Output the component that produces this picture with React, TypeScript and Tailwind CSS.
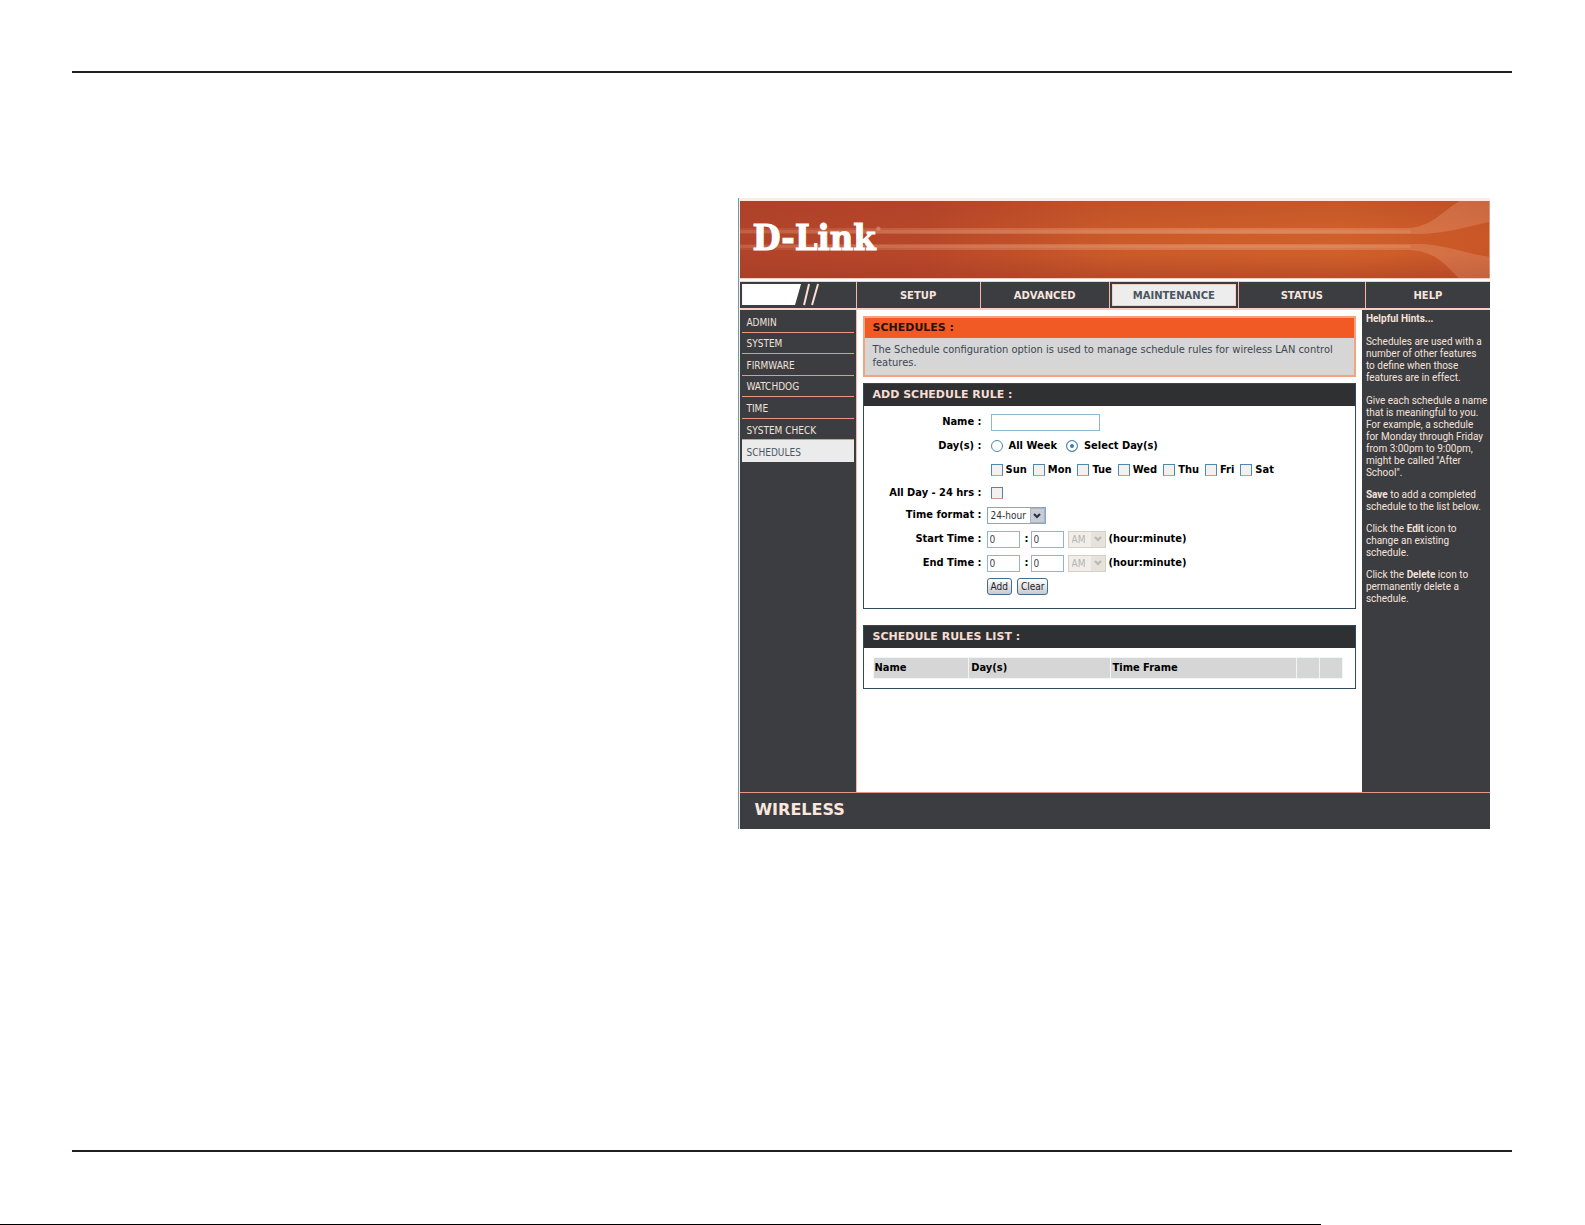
import { useState } from "react";
import type { ReactNode } from "react";

const SIDE_LINKS = ["ADMIN", "SYSTEM", "FIRMWARE", "WATCHDOG", "TIME", "SYSTEM CHECK", "SCHEDULES"];
const TABS = ["SETUP", "ADVANCED", "MAINTENANCE", "STATUS", "HELP"];
const DAYS = ["Sun", "Mon", "Tue", "Wed", "Thu", "Fri", "Sat"];

const WIDE = "font-['DejaVu_Sans',sans-serif]";
const FIELD = "h-[17px] border border-[#8fb6cf] bg-white px-[2px] text-[10px] font-normal text-[#444] outline-none";
const BUTTON =
  "h-[17px] rounded-[3px] border border-[#3f6f92] bg-linear-to-b from-white to-[#c9c9d2] px-[3px] text-[10px] leading-[14px] font-normal text-[#222]";

function Banner() {
  return (
    <header className="relative h-[77px] overflow-hidden">
      <svg className="absolute inset-0 h-full w-full" viewBox="0 0 749 77" preserveAspectRatio="none" aria-hidden="true">
        <defs>
          <linearGradient id="base" x1="0" x2="1" y1="0" y2="0">
            <stop offset="0" stopColor="#b0432a" />
            <stop offset="0.25" stopColor="#b84729" />
            <stop offset="0.5" stopColor="#cb5a29" />
            <stop offset="0.8" stopColor="#d0602a" />
            <stop offset="1" stopColor="#c85627" />
          </linearGradient>
          <linearGradient id="shade" x1="0" x2="0" y1="0" y2="1">
            <stop offset="0" stopColor="#a33a26" stopOpacity="0.25" />
            <stop offset="0.4" stopColor="#a33a26" stopOpacity="0" />
            <stop offset="0.7" stopColor="#a33a26" stopOpacity="0" />
            <stop offset="1" stopColor="#a33a26" stopOpacity="0.5" />
          </linearGradient>
          <linearGradient id="streak" x1="0" x2="1" y1="0" y2="0">
            <stop offset="0" stopColor="#f0b090" stopOpacity="0.1" />
            <stop offset="0.3" stopColor="#f0b090" stopOpacity="0.28" />
            <stop offset="0.7" stopColor="#f0b090" stopOpacity="0.36" />
            <stop offset="1" stopColor="#f0b090" stopOpacity="0.25" />
          </linearGradient>
        </defs>
        <rect width="749" height="77" fill="url(#base)" />
        <rect width="749" height="77" fill="url(#shade)" />
        <path fill="url(#streak)" d="M0 27H668C690 26 700 12 719 0H749V21C724 26 705 33 675 33H0Z" />
        <path fill="url(#streak)" d="M0 43H675C705 43 722 52 749 56V77H718C703 62 694 49 665 49H0Z" />
        <path fill="#f0b090" fillOpacity="0.18" d="M0 29H670V32H0ZM0 44H670V47H0Z" />
      </svg>
      <div className="relative flex items-start pt-4 pl-3 text-white">
        <span className="font-['DejaVu_Serif_Condensed','DejaVu_Serif',serif] text-[36px] leading-[40px] font-bold [-webkit-text-stroke:1px_white]">
          D-Link
        </span>
        <span className="pt-2 text-[6px] leading-[8px] text-[#e6b3a0]">®</span>
      </div>
    </header>
  );
}

function NavBar() {
  return (
    <nav
      className={`grid h-[26px] grid-cols-[115fr_124fr_129fr_129fr_127fr_125fr] bg-[#3b3d41] text-[10px] font-bold text-[#f7e6df] ${WIDE}`}
    >
      <svg className="h-full w-full" viewBox="0 0 115 26" aria-hidden="true">
        <path fill="#fff" d="M2 2H61L55 23H2Z" />
        <path fill="none" stroke="#fbe0d6" strokeWidth="2" d="M69 2L64 23M78 2L72 23" />
      </svg>
      {TABS.map(tab => (
        <a key={tab} href="#" className="flex border-l border-[#f6b9a5]">
          <span
            className={
              tab === "MAINTENANCE"
                ? "m-[2px] flex flex-1 items-center justify-center border border-[#f6cdbf] bg-[#ededed] text-[#4a5560]"
                : "flex flex-1 items-center justify-center"
            }
          >
            {tab}
          </span>
        </a>
      ))}
    </nav>
  );
}

function SideMenu() {
  return (
    <aside className="border-r border-[#f6b9a5] bg-[#3b3d41] px-[2px] pt-px">
      <ul className="grid h-[151px] auto-rows-fr text-[10px]">
        {SIDE_LINKS.map(link => (
          <li key={link} className={link === "SCHEDULES" ? "bg-[#ebebeb] text-[#4a5864]" : "border-b border-[#e89882] text-[#f3e2dc]"}>
            <a href="#" className="flex h-full items-center pt-[2px] pl-1">{link}</a>
          </li>
        ))}
      </ul>
    </aside>
  );
}

function Hints() {
  return (
    <aside className="bg-[#3b3d41] pt-[3px] pl-1 font-['Roboto',sans-serif] text-[10px] leading-[12px] whitespace-nowrap text-[#f7e2da]">
      <h2 className="mb-[11px] font-bold">Helpful Hints...</h2>
      <p className="mb-[11px]">
        Schedules are used with a<br />number of other features<br />to define when those<br />features are in effect.
      </p>
      <p className="mb-[10px]">
        Give each schedule a name<br />that is meaningful to you.<br />For example, a schedule<br />for Monday through Friday
        <br />from 3:00pm to 9:00pm,<br />might be called "After<br />School".
      </p>
      <p className="mb-[10px]">
        <b>Save</b> to add a completed<br />schedule to the list below.
      </p>
      <p className="mb-[10px]">
        Click the <b>Edit</b> icon to<br />change an existing<br />schedule.
      </p>
      <p>
        Click the <b>Delete</b> icon to<br />permanently delete a<br />schedule.
      </p>
    </aside>
  );
}

function Panel({ title, children }: { title: string; children: ReactNode }) {
  return (
    <section className="border border-[#2f4a5a]">
      <h2 className={`flex h-[22px] items-center bg-[#2f3032] pt-px pl-[9px] text-[11px] font-bold text-[#f7ddd4] ${WIDE}`}>
        {title}
      </h2>
      {children}
    </section>
  );
}

function Row({ label, htmlFor, height = "h-6", children }: { label?: string; htmlFor?: string; height?: string; children: ReactNode }) {
  return (
    <div className={`flex items-center ${height}`}>
      <label htmlFor={htmlFor} className="mr-[5px] w-[118px] shrink-0 text-right">{label}</label>
      {children}
    </div>
  );
}

function Check({ id, label }: { id: string; label?: string }) {
  return (
    <span className="flex items-center">
      <input
        id={id}
        type="checkbox"
        className="h-3 w-3 appearance-none border border-[#4b88b2] border-b-[#d19a90] bg-[#f4f0ee] checked:bg-[#4b88b2]"
      />
      {label && <label htmlFor={id} className="ml-[3px]">{label}</label>}
    </span>
  );
}

function Radio({ id, label, checked, onPick }: { id: string; label: string; checked: boolean; onPick: () => void }) {
  return (
    <span className="flex items-center">
      <input
        id={id}
        type="radio"
        name="days"
        checked={checked}
        onChange={onPick}
        className="h-3 w-3 appearance-none rounded-full border border-[#4b88b2] bg-white checked:bg-[#3f7aa3] checked:shadow-[inset_0_0_0_3px_#fff]"
      />
      <label htmlFor={id} className="ml-[6px]">{label}</label>
    </span>
  );
}

function Select({ id, name, options, disabled }: { id: string; name: string; options: string[]; disabled?: boolean }) {
  return (
    <span className="relative inline-flex">
      <select
        id={id}
        aria-label={name}
        disabled={disabled}
        className={
          disabled
            ? "h-[17px] w-[38px] appearance-none border border-[#d6cfc6] bg-[#f1eee9] pl-[3px] text-[10px] font-normal text-[#b4b4b0]"
            : "h-[17px] w-[59px] appearance-none border border-[#7fa9c6] bg-white pl-[3px] text-[10px] font-normal text-[#333]"
        }
      >
        {options.map(o => <option key={o}>{o}</option>)}
      </select>
      <span
        className={
          disabled
            ? "pointer-events-none absolute top-px right-px bottom-px flex w-[14px] items-center justify-center bg-[#e6e2dc] text-[#bdb8b2]"
            : "pointer-events-none absolute top-px right-px bottom-px flex w-[15px] items-center justify-center border border-[#a9b4c4] bg-[#c8ccd4] text-[#2c3440]"
        }
      >
        <svg className="h-[6px] w-2" viewBox="0 0 8 6" aria-hidden="true">
          <path d="M1 1L4 4L7 1" fill="none" stroke="currentColor" strokeWidth="2.2" />
        </svg>
      </span>
    </span>
  );
}

function TimeRow({ label, id }: { label: string; id: string }) {
  return (
    <Row label={label} htmlFor={`${id}-hour`}>
      <input id={`${id}-hour`} defaultValue="0" className={`w-[33px] ${FIELD}`} />
      <span className="w-[11px] pl-[3px] text-center">:</span>
      <input id={`${id}-minute`} aria-label={`${label} minute`} defaultValue="0" className={`mr-1 w-[33px] ${FIELD}`} />
      <Select id={`${id}-half`} name={`${label} AM or PM`} options={["AM", "PM"]} disabled />
      <span className="ml-[3px]">(hour:minute)</span>
    </Row>
  );
}

function RuleForm() {
  const [mode, setMode] = useState<"all" | "select">("select");

  return (
    <form className="pt-1 pb-[10px] text-[11px] font-bold whitespace-nowrap text-black" onSubmit={e => e.preventDefault()}>
      <Row label="Name :" htmlFor="name">
        <input id="name" className={`ml-1 w-[109px] ${FIELD}`} />
      </Row>
      <Row label="Day(s) :" htmlFor="all-week">
        <div className="ml-1 flex gap-[9px]">
          <Radio id="all-week" label="All Week" checked={mode === "all"} onPick={() => setMode("all")} />
          <Radio id="select-days" label="Select Day(s)" checked={mode === "select"} onPick={() => setMode("select")} />
        </div>
      </Row>
      <Row>
        <div className="ml-1 flex gap-[6px]">
          {DAYS.map(d => <Check key={d} id={d} label={d} />)}
        </div>
      </Row>
      <Row label="All Day - 24 hrs :" htmlFor="all-day" height="h-[22px]">
        <div className="ml-1"><Check id="all-day" /></div>
      </Row>
      <Row label="Time format :" htmlFor="format" height="h-[23px]">
        <Select id="format" name="Time format" options={["24-hour", "12-hour"]} />
      </Row>
      <TimeRow label="Start Time :" id="start" />
      <TimeRow label="End Time :" id="end" />
      <Row height="h-[23px]">
        <button type="submit" className={`mr-[5px] ${BUTTON}`}>Add</button>
        <button type="reset" className={BUTTON}>Clear</button>
      </Row>
    </form>
  );
}

function RulesTable() {
  return (
    <div className="pt-[9px] pr-3 pb-[9px] pl-[9px]">
      <table className="w-full table-fixed border-separate border-spacing-px bg-[#f2f5f5] text-left text-[11px] text-black">
        <colgroup>
          <col className="w-[20.4%]" />
          <col className="w-[30.2%]" />
          <col className="w-[40%]" />
          <col />
          <col />
        </colgroup>
        <thead>
          <tr className="h-5 bg-[#d6d6d6]">
            <th className="pl-px">Name</th>
            <th className="pl-[2px]">Day(s)</th>
            <th className="pl-[2px]">Time Frame</th>
            <td />
            <td />
          </tr>
        </thead>
      </table>
    </div>
  );
}

function RouterPage() {
  return (
    <div className="border-l border-[#6a9bb0] bg-[#fdeae3] pt-[3px] pl-px font-['DejaVu_Sans_Condensed','DejaVu_Sans',sans-serif]">
      <Banner />
      <div className="h-1 border-y border-[#f6cdbf] bg-white" />
      <NavBar />
      <div className="h-[2px] bg-[#f8cfc2]" />
      <div className="grid min-h-[482px] grid-cols-[minmax(0,116fr)_minmax(0,505fr)_minmax(0,128fr)]">
        <SideMenu />
        <main className="bg-white px-[6px] pt-[6px]">
          <section className="mb-[6px] border-2 border-[#f3a47c] bg-[#d6d6d6]">
            <h1 className={`flex h-5 items-center bg-[#f15a24] pt-px pl-[8px] text-[11px] font-bold text-[#2a1208] ${WIDE}`}>
              SCHEDULES :
            </h1>
            <p className="h-[37px] pt-[5px] pl-[8px] text-[11px] leading-[13px] text-[#3c4652]">
              The Schedule configuration option is used to manage schedule rules for wireless LAN control features.
            </p>
          </section>
          <Panel title="ADD SCHEDULE RULE :">
            <RuleForm />
          </Panel>
          <div className="h-4" />
          <Panel title="SCHEDULE RULES LIST :">
            <RulesTable />
          </Panel>
        </main>
        <Hints />
      </div>
      <footer
        className={`flex h-[37px] items-center border-t border-[#e89882] bg-[#3b3d41] pb-[3px] pl-[14px] text-[16px] font-bold text-[#fbe6de] ${WIDE}`}
      >
        WIRELESS
      </footer>
    </div>
  );
}

export default function App() {
  return (
    <div className="flex min-h-screen flex-col bg-white">
      <div className="flex flex-1 flex-col px-[72px] pt-[71px] pb-[72px]">
        <hr className="mr-px border-t-2 border-[#231f20]" />
        <div className="mt-[125px] grid grid-cols-[666fr_751fr] pr-[23px]">
          <div className="col-start-2">
            <RouterPage />
          </div>
        </div>
        <hr className="mt-auto mr-px border-t-2 border-[#231f20]" />
      </div>
      <div className="h-px w-5/6 bg-black" />
    </div>
  );
}
